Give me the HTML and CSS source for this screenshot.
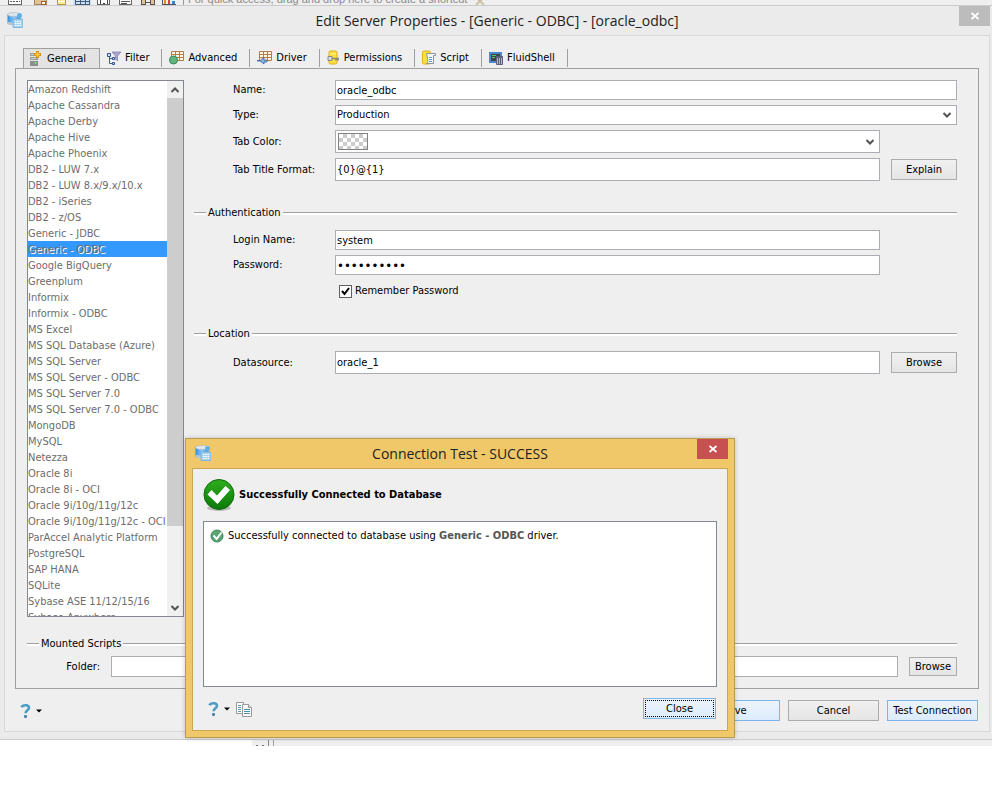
FILE: index.html
```html
<!DOCTYPE html>
<html lang="en">
<head>
    <meta charset="UTF-8">
    <meta name="viewport" content="width=device-width, initial-scale=1.0">
    <title>Edit Server Properties</title>
    <link rel="stylesheet" href="styles.css">
</head>
<body>
    <svg class="defs" width="0" height="0" aria-hidden="true">
        <linearGradient id="blue" x1="0" x2="1" y1="0" y2="0">
            <stop offset="0" stop-color="#2f8fdc"/>
            <stop offset="0.5" stop-color="#8ccbf5"/>
            <stop offset="1" stop-color="#2f8fdc"/>
        </linearGradient>
        <linearGradient id="green" x1="0" x2="0" y1="0" y2="1">
            <stop offset="0" stop-color="#2fae1c"/>
            <stop offset="1" stop-color="#0a7a0a"/>
        </linearGradient>
        <symbol id="icon-app" viewBox="0 0 16 16">
            <path d="M0.500 2v9c0 1.500 3 2 7 2s6-.5 6-2V2z" fill="url(#blue)"/>
            <path d="M1 9.500c2 1.500 9 1.500 12 0V12c-3 1.500-10 1.500-12 0z" fill="#b9c6d0"/>
            <ellipse cx="7" cy="2.500" rx="6.500" ry="2" fill="#dfe6ea" stroke="#a9b7c2" stroke-width=".6"/>
            <circle cx="12.500" cy="3.500" r="2.500" fill="#5fb2e8"/>
            <rect x="6" y="7" width="10" height="8.500" fill="#a5d3f0" stroke="#6fb0dc" stroke-width=".8"/>
            <path d="M8 9.500h6M8 11.500h6M8 13.500h6" stroke="#fff" stroke-dasharray="1.500 .8"/>
        </symbol>
        <symbol id="icon-help" viewBox="0 0 22 16">
            <path d="M1.500 4.200C2.500 2 8.800 1 9 4.800c0 2.500-3.400 2.600-3.400 5.400" fill="none" stroke="#4a9cc4" stroke-width="2.600"/>
            <rect x="4" y="12" width="3" height="3" rx="1" fill="#4a87ad"/>
            <path d="M16 6.500h6l-3 3z" fill="#000"/>
        </symbol>
    </svg>

    <div class="toolbar">
        <svg class="toolbar-icons" width="188" height="5" viewBox="0 0 188 5" aria-hidden="true" shape-rendering="crispEdges">
            <path d="M8.500 0v4.500h13V0" fill="#fff" stroke="#666"/>
            <path d="M10 1.500h10" stroke="#555" stroke-dasharray="2 1"/>
            <path d="M34.500 0v4.500h12V0" fill="#e2c193" stroke="#a88459"/>
            <path d="M41 1h4v3h-4z" fill="#fff" stroke="#a05f2e"/>
            <path d="M57.500 0v4.500h8V0" fill="#fbeb9a" stroke="#b59c3c"/>
            <path d="M58 1.500h7" stroke="#fff"/>
            <path d="M73 0h18v5H73z" fill="#c9e1f8"/>
            <path d="M75.500 0v4.500h14V0M80.500 0v4M85.500 0v4M75 1.500h14" fill="none" stroke="#475a77"/>
            <path d="M97.500 0v4.500h12V0" fill="#fff" stroke="#666"/>
            <path d="M100 0v4M103 3h2M107 0v4" stroke="#444"/>
            <path d="M119.500 0v4.500h12V0" fill="#fff" stroke="#666"/>
            <path d="M121 1.500h9M121 3.500h6" stroke="#555"/>
            <path d="M141.500 0v4.500h4V0M150.500 0v4.500h4V0M146 2h4" fill="#e2c193" stroke="#555"/>
            <path d="M162 0v4.500h14" fill="none" stroke="#555"/>
            <path d="M164 0h2v4h-2z" fill="#e08b2c"/>
            <path d="M168 0h2v4h-2z" fill="#d24a35"/>
            <path d="M172 1h3v3h-3z" fill="#4680c4"/>
            <path d="M183.500 0v5" stroke="#999"/>
        </svg>
        <span class="toolbar-hint">For quick access, drag and drop here to create a shortcut</span>
        <svg width="10" height="5" viewBox="0 0 10 5" aria-hidden="true"><path d="M1 5l4-4 4 4M3 0l2 1.500L7 0" fill="none" stroke="#c9c2a4" stroke-width="2"/></svg>
    </div>

    <main class="window">
        <header class="titlebar">
            <svg class="app-icon" width="16" height="16"><use href="#icon-app"/></svg>
            <h1 class="title">Edit Server Properties - [Generic - ODBC] - [oracle_odbc]</h1>
            <button class="close" aria-label="Close window">
                <svg width="8" height="8" viewBox="0 0 8 8"><path d="M0.500 1l7 6M7.500 1l-7 6" stroke="#fff" stroke-width="1.800"/></svg>
            </button>
        </header>

        <div class="frame">
            <nav class="tabs" role="tablist">
                <button class="tab active" role="tab" aria-selected="true">
                    <svg width="14" height="16" viewBox="0 0 14 16"><path d="M1 2h8v3H1zM1 6h8v3H1z" fill="#9b9b9b"/><path d="M1 10h8v5H1z" fill="#8d8d8d"/><path d="M2 3.500h4M2 7.500h5" stroke="#d0d0d0"/><circle cx="6.500" cy="12" r="1" fill="#5dff43"/><path d="M8.500 0v7M5 3.500h7" stroke="#d88c1d" stroke-width="3"/><path d="M8.500 1v5M6 3.500h5" stroke="#ffc745" stroke-width="1.500"/></svg>
                    General
                </button>
                <button class="tab" role="tab">
                    <svg width="14" height="16" viewBox="0 0 14 16"><path d="M5 2h9L10.500 6v5L8.500 9V6z" fill="#aaa6cf" stroke="#7d78ab" stroke-width=".7"/><path d="M2.500 5v8.500M2.500 8.500H6M2.500 13.500H6" stroke="#415b96" fill="none"/><path d="M.5 3.500h3v3h-3zM5.500 7.500h2v2h-2zM5.500 12.500h2v2h-2z" fill="#d7e0f5" stroke="#344f91"/></svg>
                    Filter
                </button>
                <button class="tab" role="tab">
                    <svg width="15" height="16" viewBox="0 0 15 16"><path d="M2.500 1.500h12v9h-12z" fill="#fff6e8" stroke="#b77c48"/><path d="M2.500 4.500h12M2.500 7.500h12M6.500 1.500v9M10.500 1.500v9" stroke="#b77c48"/><circle cx="4.500" cy="10" r="4" fill="#62b57c" stroke="#35875a"/></svg>
                    Advanced
                </button>
                <button class="tab" role="tab">
                    <svg width="15" height="16" viewBox="0 0 15 16"><path d="M2.500 1.500h12v9h-12z" fill="#fff6e8" stroke="#b77c48"/><path d="M2.500 4.500h12M2.500 7.500h12M6.500 1.500v9M10.500 1.500v9" stroke="#b77c48"/><path d="M0 10.500h3l4-3v2.500h3v2H7V14l-4-3H0z" fill="#8cafe4" stroke="#3e629f" stroke-width=".8"/></svg>
                    Driver
                </button>
                <button class="tab" role="tab">
                    <svg width="13" height="16" viewBox="0 0 13 16"><rect x="2" y="1" width="8" height="13" rx="1.500" fill="#fbdf3a" stroke="#dcae20"/><path d="M3 4h6" stroke="#fff3a0"/><path d="M1 6.500h4v4H1z" fill="#ddd" stroke="#888"/><path d="M5 8.500h7M9 8.500v2M11 8.500v2" stroke="#888" stroke-width="1.600"/></svg>
                    Permissions
                </button>
                <button class="tab" role="tab">
                    <svg width="14" height="16" viewBox="0 0 14 16"><rect x=".5" y="1" width="8" height="13" rx="1.500" fill="#fbdf3a" stroke="#dcae20"/><path d="M4.500 3.500h9v2h-2v8h-7c2-1 1-3 1-5s-1-3-1-5z" fill="#f4f6f8" stroke="#8b949d"/><path d="M7 7.500h3M7 9.500h3M7 11.500h3" stroke="#5a9ccc"/></svg>
                    Script
                </button>
                <button class="tab" role="tab">
                    <svg width="14" height="16" viewBox="0 0 14 16"><path d="M1 3h11v9H1z" fill="#3a434a" stroke="#4c86cc" stroke-width="2"/><path d="M3 5.500h4M3 7.500h3" stroke="#4fd157"/><path d="M7.500 7.500h6v7h-6z" fill="#b4b6c8" stroke="#5c5f7d"/><path d="M7 6.500h7M9.500 8v6M11.500 8v6" stroke="#5c5f7d"/></svg>
                    FluidShell
                </button>
            </nav>

            <section class="panel">
                <div class="columns">
                    <div class="server-list">
                        <ul class="servers">
                            <li>Amazon Redshift</li>
                            <li>Apache Cassandra</li>
                            <li>Apache Derby</li>
                            <li>Apache Hive</li>
                            <li>Apache Phoenix</li>
                            <li>DB2 - LUW 7.x</li>
                            <li>DB2 - LUW 8.x/9.x/10.x</li>
                            <li>DB2 - iSeries</li>
                            <li>DB2 - z/OS</li>
                            <li>Generic - JDBC</li>
                            <li class="selected">Generic - ODBC</li>
                            <li>Google BigQuery</li>
                            <li>Greenplum</li>
                            <li>Informix</li>
                            <li>Informix - ODBC</li>
                            <li>MS Excel</li>
                            <li>MS SQL Database (Azure)</li>
                            <li>MS SQL Server</li>
                            <li>MS SQL Server - ODBC</li>
                            <li>MS SQL Server 7.0</li>
                            <li>MS SQL Server 7.0 - ODBC</li>
                            <li>MongoDB</li>
                            <li>MySQL</li>
                            <li>Netezza</li>
                            <li>Oracle 8i</li>
                            <li>Oracle 8i - OCI</li>
                            <li>Oracle 9i/10g/11g/12c</li>
                            <li>Oracle 9i/10g/11g/12c - OCI</li>
                            <li>ParAccel Analytic Platform</li>
                            <li>PostgreSQL</li>
                            <li>SAP HANA</li>
                            <li>SQLite</li>
                            <li>Sybase ASE 11/12/15/16</li>
                            <li>Sybase Anywhere</li>
                        </ul>
                        <div class="scrollbar">
                            <button class="scroll-arrow" aria-label="Scroll up"><svg width="8" height="6" viewBox="0 0 8 6"><path d="M.5 5L4 1.500 7.500 5" fill="none" stroke="#555" stroke-width="2"/></svg></button>
                            <div class="scroll-thumb"></div>
                            <button class="scroll-arrow" aria-label="Scroll down"><svg width="8" height="6" viewBox="0 0 8 6"><path d="M.5 1L4 4.500 7.500 1" fill="none" stroke="#555" stroke-width="2"/></svg></button>
                        </div>
                    </div>

                    <form class="details">
                        <div class="fields">
                            <label for="name">Name:</label>
                            <input class="wide" id="name" type="text" value="oracle_odbc">
                            <label for="type">Type:</label>
                            <select class="wide" id="type"><option>Production</option></select>
                            <label for="color">Tab Color:</label>
                            <div class="color-box tall">
                                <select id="color"><option></option></select>
                                <span class="swatch"></span>
                            </div>
                            <label for="format">Tab Title Format:</label>
                            <input class="tall" id="format" type="text" value="{0}@{1}">
                            <button class="btn" type="button">Explain</button>
                        </div>

                        <h2 class="legend">Authentication</h2>
                        <div class="fields">
                            <label for="login">Login Name:</label>
                            <input id="login" type="text" value="system">
                            <label for="password">Password:</label>
                            <input id="password" type="password" value="changeme00">
                            <label class="remember"><input type="checkbox" checked>Remember Password</label>
                        </div>

                        <h2 class="legend">Location</h2>
                        <div class="fields">
                            <label for="datasource">Datasource:</label>
                            <input class="tall" id="datasource" type="text" value="oracle_1">
                            <button class="btn" type="button">Browse</button>
                        </div>
                    </form>
                </div>

                <h2 class="legend mounted">Mounted Scripts</h2>
                <div class="folder-row">
                    <label for="folder">Folder:</label>
                    <input id="folder" type="text">
                    <button class="btn" type="button">Browse</button>
                </div>
            </section>

            <footer class="actions">
                <button class="help" aria-label="Help"><svg width="22" height="16"><use href="#icon-help"/></svg></button>
                <button class="btn primary">Save</button>
                <button class="btn">Cancel</button>
                <button class="btn primary">Test Connection</button>
            </footer>
        </div>
    </main>
    <div class="statusbar"><span class="status-grip"></span></div>

    <div class="modal" role="dialog" aria-labelledby="modal-title">
        <header class="titlebar">
            <svg class="app-icon" width="16" height="16"><use href="#icon-app"/></svg>
            <h2 class="title" id="modal-title">Connection Test - SUCCESS</h2>
            <button class="close" aria-label="Close dialog">
                <svg width="8" height="8" viewBox="0 0 8 8"><path d="M0.500 1l7 6M7.500 1l-7 6" stroke="#fff" stroke-width="1.800"/></svg>
            </button>
        </header>
        <div class="modal-body">
            <div class="result">
                <svg width="32" height="32" viewBox="0 0 32 32"><ellipse cx="16" cy="29" rx="12" ry="3" fill="#bbb"/><circle cx="16" cy="15.500" r="15" fill="url(#green)" stroke="#0b690b"/><path d="M4.500 15.500l4-4.500 5.500 5.500L22.500 7l4.500 4-12.500 14z" fill="#fff"/></svg>
                <strong>Successfully Connected to Database</strong>
            </div>
            <div class="log">
                <p class="log-line">
                    <svg width="14" height="14" viewBox="0 0 14 14"><circle cx="7" cy="7" r="6" fill="#5aa673" stroke="#3e8458"/><path d="M3.500 6.500L6.500 10l5-6.500" fill="none" stroke="#fff" stroke-width="2"/></svg>
                    <span>Successfully connected to database using <b>Generic - ODBC</b> driver.</span>
                </p>
            </div>
            <footer class="modal-actions">
                <button class="help" aria-label="Help"><svg width="22" height="16"><use href="#icon-help"/></svg></button>
                <button class="help" aria-label="Copy"><svg width="16" height="16" viewBox="0 0 16 16"><path d="M.5 1.500h7v11h-7z" fill="#fff" stroke="#999"/><path d="M2 4.500h3M2 6.500h3M2 8.500h3M2 10.500h3" stroke="#5b9bb8"/><path d="M6.500 3.500h6l3 3v9h-9z" fill="#fff" stroke="#999"/><path d="M12.500 3.500v3h3" fill="#ddd" stroke="#999"/><path d="M8 8.500h6M8 10.500h6M8 12.500h6" stroke="#4a8cab"/></svg></button>
                <button class="btn primary focused">Close</button>
            </footer>
        </div>
    </div>
</body>
</html>
```

FILE: styles.css
```css
* {
    box-sizing: border-box;
}
body {
    margin: 0;
    background-color: #fff;
    color: #000;
    font-family: 'DejaVu Sans Condensed', 'Noto Sans', sans-serif;
    font-size: 11px;
    line-height: 16px;
}
button, input, select {
    font: inherit;
    color: inherit;
    margin: 0;
}
button {
    padding: 0;
    border: none;
    background: none;
}
svg {
    flex: none;
}
.defs {
    position: absolute;
}

/* strip of the main window above the dialog */
.toolbar {
    display: flex;
    height: 5px;
    overflow: hidden;
    background-color: #efefef;
}
.toolbar-hint {
    align-self: flex-end;
    margin-right: 8px;
    color: #8a8a8a;
    font-family: 'Liberation Sans', sans-serif;
    font-size: 11px;
    line-height: 12px;
}

/* window */
.window {
    padding: 0 2px 7px 4px;
    background-color: #ebebeb;
    border-top: 1px solid #ccc;
    border-bottom: 1px solid #ccc;
}
.titlebar {
    display: grid;
    grid-template-columns: 31px 1fr 31px;
    height: 29px;
}
.app-icon {
    margin: 6px 0 0 3px;
}
.title {
    margin: 0;
    color: #222;
    font-family: 'Open Sans', sans-serif;
    font-size: 14px;
    font-weight: normal;
    line-height: 30px;
    text-align: center;
}
.close {
    display: flex;
    justify-content: center;
    align-items: center;
    height: 20px;
    background-color: #bcbcbc;
}
.frame {
    padding: 12px 10px 10px;
    background-color: #efefef;
    border: 1px solid #d9d9d9;
}

/* tabs */
.tabs {
    display: flex;
    align-items: center;
    height: 20px;
    padding-left: 8px;
}
.tab {
    display: flex;
    align-items: center;
    gap: 4px;
    height: 18px;
    padding: 0 12px 0 7px;
    border-right: 1px solid #a0a0a0;
}
.tab.active {
    align-self: stretch;
    height: auto;
    padding: 0 13px 0 5px;
    background-color: #e3e3e3;
    border: 1px solid #a0a0a0;
    border-bottom: none;
}
.panel {
    padding: 11px 21px 11px 11px;
    border: 1px solid #a0a0a0;
}
.columns {
    display: flex;
    gap: 10px;
}

/* server list */
.server-list {
    display: flex;
    flex: none;
    width: 157px;
    height: 537px;
    background-color: #fff;
    border: 1px solid #828790;
}
.servers {
    flex: 1;
    min-width: 0;
    margin: 0;
    padding: 0;
    overflow: hidden;
    list-style: none;
    color: #6d6d6d;
    line-height: 18px;
    white-space: nowrap;
}
.servers li {
    height: 16px;
}
.servers .selected {
    background-color: #3399ff;
    text-shadow: 1px 1px #fff;
}
.scrollbar {
    display: flex;
    flex-direction: column;
    width: 16px;
    background-color: #f0f0f0;
}
.scroll-arrow {
    height: 17px;
}
.scroll-arrow:last-child {
    margin-top: auto;
}
.scroll-thumb {
    height: 80%;
    background-color: #cdcdcd;
}

/* form */
.details {
    flex: 1;
}
.fields {
    display: grid;
    grid-template-columns: 102px 1fr 66px;
    column-gap: 11px;
    row-gap: 5px;
    align-items: center;
    padding-left: 39px;
}
.fields label {
    grid-column: 1;
    margin-right: -11px;
    line-height: 18px;
}
.fields > input, .fields > select, .color-box {
    margin-left: -11px;
}
input, select {
    height: 20px;
    padding: 0 1px;
    background-color: #fff;
    border: 1px solid #abadb3;
    border-radius: 0;
    outline: none;
}
input[type="password"] {
    font-size: 13px;
}
select {
    appearance: none;
    background: #fff url("data:image/svg+xml,%3Csvg xmlns='http://www.w3.org/2000/svg' width='8' height='6'%3E%3Cpath d='M.5 1L4 4.500 7.500 1' fill='none' stroke='%23555' stroke-width='2'/%3E%3C/svg%3E") no-repeat right 5px center;
}
.wide {
    grid-column: 2 / 4;
}
.tall {
    height: 23px;
}
.color-box {
    position: relative;
}
.color-box select {
    width: 100%;
    height: 100%;
}
.swatch {
    position: absolute;
    top: 3px;
    left: 3px;
    width: 30px;
    height: 17px;
    border: 1px solid #808080;
    background: repeating-conic-gradient(#ccc 0 25%, #fff 0 50%) 0 0 / 8px 8px;
    pointer-events: none;
}
.fields .remember {
    grid-column: 2;
    display: flex;
    align-items: center;
    gap: 3px;
    height: 22px;
    margin-left: -7px;
}
.remember input {
    appearance: none;
    width: 13px;
    height: 13px;
    padding: 0;
    border-color: #606060;
    background: #fff url("data:image/svg+xml,%3Csvg xmlns='http://www.w3.org/2000/svg' width='11' height='11'%3E%3Cpath d='M2 5l2.500 3L9 2' fill='none' stroke='%23000' stroke-width='2'/%3E%3C/svg%3E");
}
.legend {
    display: flex;
    align-items: center;
    gap: 2px;
    margin: 24px 0 9px;
    font-size: 11px;
    font-weight: normal;
    line-height: 16px;
}
.legend::before, .legend::after {
    content: "";
    width: 12px;
    height: 2px;
    background-color: #fff;
    border-top: 1px solid #a0a0a0;
}
.legend::after {
    flex: 1;
}
.legend.mounted {
    margin: 19px 0 4px;
}
.btn {
    height: 21px;
    border: 1px solid #acacac;
    background: linear-gradient(#f0f0f0, #e5e5e5);
}
.btn.primary {
    border-color: #7eb4ea;
    background: linear-gradient(#ecf4fc, #dcecfc);
}
.folder-row {
    display: grid;
    grid-template-columns: 73px 1fr 48px;
    gap: 11px;
    align-items: center;
}
.folder-row label {
    text-align: right;
}
.folder-row input {
    height: 21px;
}
.folder-row .btn {
    height: 19px;
}
.actions {
    display: flex;
    gap: 8px;
    align-items: center;
    padding: 11px 1px 0 5px;
}
.actions .btn {
    width: 91px;
}
.help {
    display: flex;
}
.actions .help {
    margin-right: auto;
}

/* rest of the main window below the dialog */
.statusbar {
    height: 6px;
    padding-left: 252px;
    background: #efefef linear-gradient(#fff, #fff) no-repeat 0 0 / 252px 6px;
}
.status-grip {
    display: block;
    width: 22px;
    height: 6px;
    border-right: 1px solid #a0a0a0;
    background: linear-gradient(#828790, #828790) no-repeat 16px 0 / 1px 6px,
                linear-gradient(#777, #777) no-repeat 4px 5px / 2px 1px,
                linear-gradient(#777, #777) no-repeat 10px 5px / 2px 1px;
}

/* connection test dialog */
.modal {
    position: absolute;
    top: 438px;
    left: 185px;
    width: 550px;
    padding: 0 6px 6px;
    background-color: #f0c869;
    border: 1px solid #b89a52;
    box-shadow: 0 0 5px rgba(0, 0, 0, 0.2);
}
.modal .close {
    background-color: #c75050;
}
.modal-body {
    padding: 10px;
    background-color: #efefef;
    border: 1px solid #cba753;
}
.result {
    display: flex;
    align-items: center;
    gap: 4px;
    margin-bottom: 10px;
}
.log {
    height: 166px;
    padding: 6px;
    background-color: #fff;
    border: 1px solid #828790;
}
.log-line {
    display: flex;
    align-items: center;
    gap: 4px;
    margin: 0;
}
.log-line b {
    color: #555;
}
.modal-actions {
    display: flex;
    align-items: center;
    gap: 6px;
    margin-top: 11px;
    padding: 0 1px 1px 5px;
}
.modal-actions .btn {
    width: 73px;
    margin-left: auto;
}
.focused {
    outline: 1px dotted #000;
    outline-offset: -3px;
}
```
